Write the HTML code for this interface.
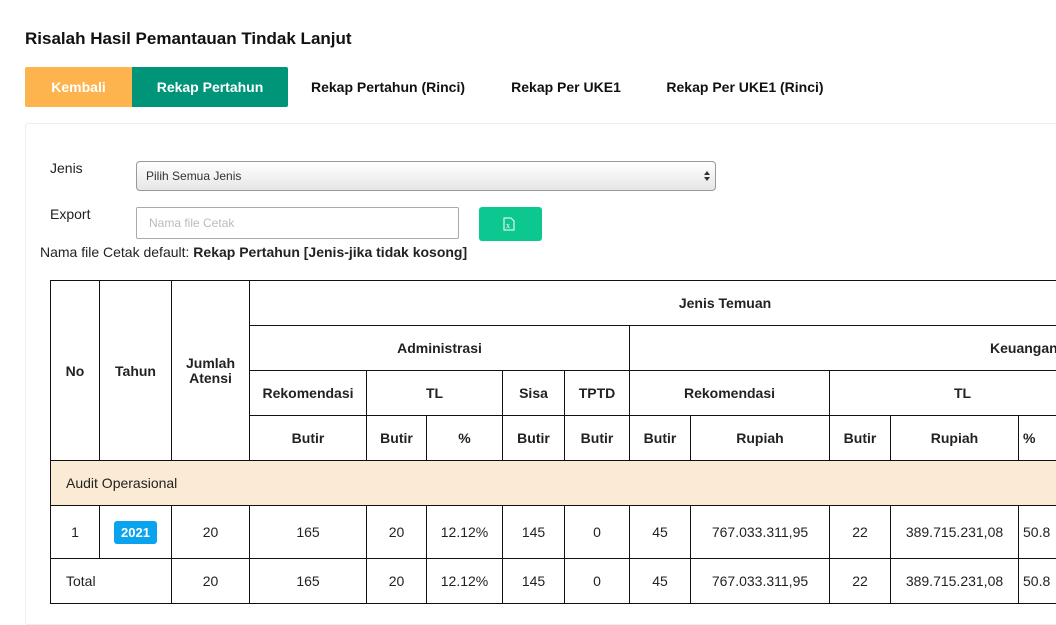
<!DOCTYPE html>
<html><head><meta charset="utf-8"><style>
html,body{margin:0;padding:0;width:1056px;height:582px;overflow:hidden;background:#fff;font-family:"Liberation Sans",sans-serif;color:#222}
h1{position:absolute;left:25px;top:29px;margin:0;font-size:17px;font-weight:bold;color:#111}
.tab{position:absolute;top:67px;height:40px;line-height:40px;font-size:14px;font-weight:bold;text-align:center;color:#111}
.card{position:absolute;left:25px;top:123px;width:1100px;height:500px;border:1px solid #eee;border-radius:3px}
.lbl{position:absolute;font-size:14px;color:#222}
.sel{position:absolute;left:136px;top:161px;width:578px;height:28px;border:1px solid #999;border-radius:4px;background:linear-gradient(#fff,#e6e6e6);font-size:12px;line-height:28px;text-indent:9px;color:#333}
.inp{position:absolute;left:136px;top:207px;width:321px;height:30px;border:1px solid #aaa;border-radius:2px;font-size:12px;line-height:30px;text-indent:12px;color:#bbb}
.btn{position:absolute;left:479px;top:207px;width:63px;height:34px;background:#0cc78f;border-radius:3px}
table{position:absolute;left:50px;top:280px;border-collapse:collapse;table-layout:fixed;width:1150px}
td{border:1px solid #111;text-align:center;font-size:14px;padding:0;height:44px}
th{border:1px solid #111;text-align:center;font-size:14px;font-weight:bold;padding:0;height:44px}
.badge{display:inline-block;background:#0aa3ee;color:#fff;font-weight:bold;font-size:13px;padding:4px 7px;border-radius:3px}
</style></head><body>
<h1>Risalah Hasil Pemantauan Tindak Lanjut</h1>
<div class="tab" style="left:25px;width:107px;background:#fdb44e;color:#fff;border-radius:2px 0 0 2px">Kembali</div>
<div class="tab" style="left:132px;width:156px;background:#009479;color:#fff;border-radius:0 2px 2px 0">Rekap Pertahun</div>
<div class="tab" style="left:300px;width:176px">Rekap Pertahun (Rinci)</div>
<div class="tab" style="left:500px;width:132px">Rekap Per UKE1</div>
<div class="tab" style="left:655px;width:180px">Rekap Per UKE1 (Rinci)</div>
<div class="card"></div>
<div class="lbl" style="left:50px;top:160px">Jenis</div>
<div class="sel">Pilih Semua Jenis<svg width="6" height="10" viewBox="0 0 6 10" style="position:absolute;right:5px;top:9px"><path d="M0 4L3 0L6 4zM0 6L3 10L6 6z" fill="#333"/></svg></div>
<div class="lbl" style="left:50px;top:206px">Export</div>
<div class="inp">Nama file Cetak</div>
<div class="btn"><svg width="12" height="14" viewBox="0 0 12 14" style="position:absolute;left:24px;top:10px"><path d="M1 1h7l3 3v9H1z" fill="none" stroke="#fff"/><text x="3" y="11" font-size="8" fill="#fff" font-family="Liberation Serif">x</text></svg></div>
<div class="lbl" style="left:40px;top:244px">Nama file Cetak default: <b>Rekap Pertahun [Jenis-jika tidak kosong]</b></div>
<table>
<colgroup><col style="width:49px"><col style="width:72px"><col style="width:78px"><col style="width:117px"><col style="width:60px"><col style="width:76px"><col style="width:62px"><col style="width:65px"><col style="width:61px"><col style="width:139px"><col style="width:61px"><col style="width:128px"><col style="width:85px"><col style="width:97px"></colgroup>
<tr><th rowspan="4">No</th><th rowspan="4">Tahun</th><th rowspan="4" style="line-height:15px">Jumlah<br>Atensi</th><th colspan="11">Jenis Temuan</th></tr>
<tr><th colspan="5">Administrasi</th><th colspan="6" style="text-align:left;padding-left:360px">Keuangan</th></tr>
<tr><th>Rekomendasi</th><th colspan="2">TL</th><th>Sisa</th><th>TPTD</th><th colspan="2">Rekomendasi</th><th colspan="3" style="text-align:left;padding-left:124px">TL</th><th></th></tr>
<tr><th>Butir</th><th>Butir</th><th>%</th><th>Butir</th><th>Butir</th><th>Butir</th><th>Rupiah</th><th>Butir</th><th>Rupiah</th><th style="text-align:left;padding-left:4px">%</th><th></th></tr>
<tr><td colspan="14" style="background:#fbead4;text-align:left;padding-left:15px">Audit Operasional</td></tr>
<tr><td style="height:52px">1</td><td><span class="badge">2021</span></td><td>20</td><td>165</td><td>20</td><td>12.12%</td><td>145</td><td>0</td><td>45</td><td>767.033.311,95</td><td>22</td><td>389.715.231,08</td><td style="text-align:left;padding-left:4px">50.8</td><td></td></tr>
<tr><td colspan="2" style="text-align:left;padding-left:15px">Total</td><td>20</td><td>165</td><td>20</td><td>12.12%</td><td>145</td><td>0</td><td>45</td><td>767.033.311,95</td><td>22</td><td>389.715.231,08</td><td style="text-align:left;padding-left:4px">50.8</td><td></td></tr>
</table>
</body></html>
